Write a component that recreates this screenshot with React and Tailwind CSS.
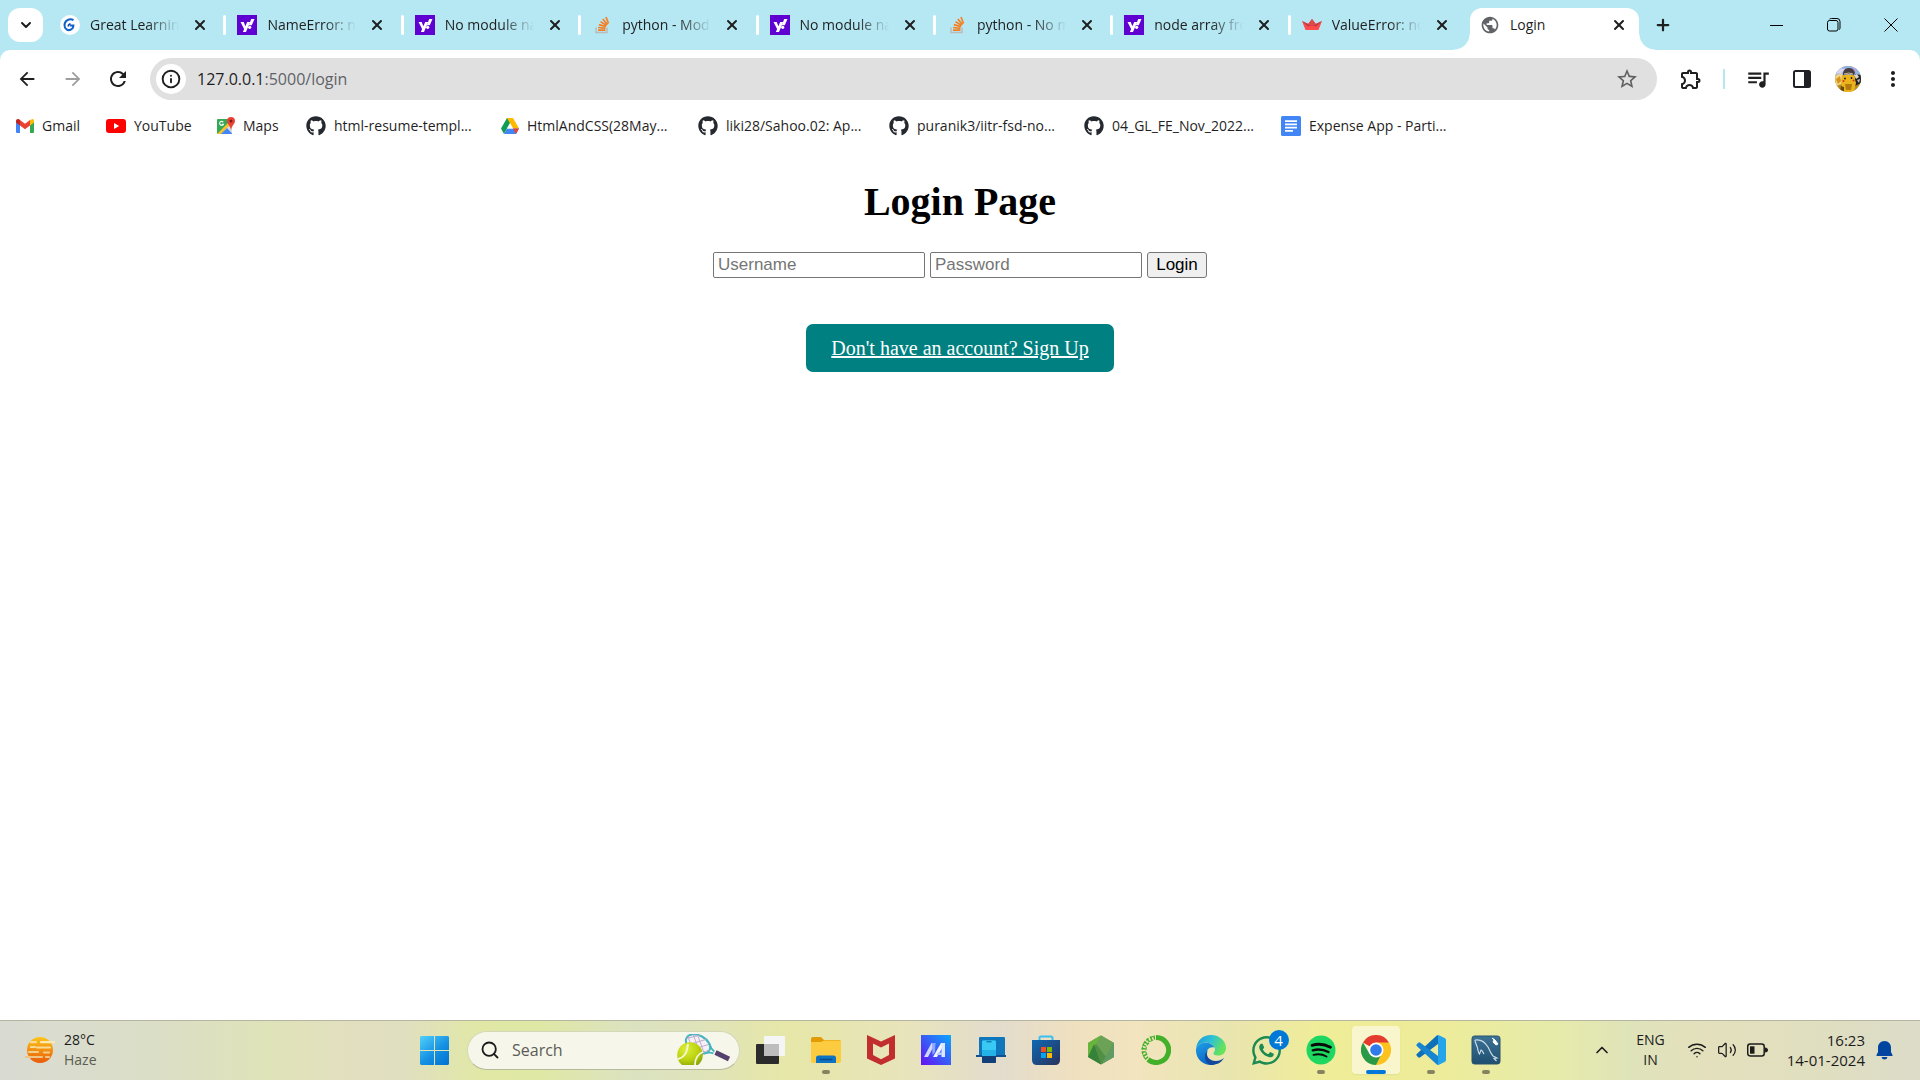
import { ChevronDown, ChevronUp, X, Plus, Info, Search, Wifi, Volume2 } from 'lucide-react';
import { FaGithub, FaWhatsapp } from 'react-icons/fa';
import {
  MdArrowBack,
  MdArrowForward,
  MdRefresh,
  MdStarBorder,
  MdOutlineExtension,
  MdQueueMusic,
  MdMoreVert,
  MdPublic,
} from 'react-icons/md';

/* ---------- favicons ---------- */

function GreatLearningIcon() {
  return (
    <svg viewBox="0 0 20 20" className="size-5">
      <circle cx="10" cy="10" r="10" fill="#fff" />
      <path d="M13.500 5.200C9.500 3 4.500 5.500 4.500 10.200c0 4 3.500 5.600 6 4.600 2-.8 2.800-2.600 2.900-4.300H9.800" fill="none" stroke="#0f62c9" strokeWidth="2" />
      <path d="M10.500 8.800c-1.500.4-2.300 1.400-2.300 2.600" fill="none" stroke="#1a3fa8" strokeWidth="1.500" />
    </svg>
  );
}

function YahooIcon() {
  return (
    <svg viewBox="0 0 20 20" className="size-5">
      <rect width="20" height="20" fill="#5f01d1" />
      <path d="M3.500 7h3.200l1.700 4.200L10.200 7h3L9 17H5.900l1.200-2.900z" fill="#fff" />
      <path d="M14.200 4h3.300l-2.700 6.300h-3z" fill="#fff" />
      <circle cx="12.700" cy="12.300" r="1.600" fill="#fff" />
    </svg>
  );
}

function StackIcon() {
  return (
    <svg viewBox="0 0 20 20" className="size-5">
      <path d="M4 12.500v5h11v-5" fill="none" stroke="#bcbbbb" strokeWidth="1.500" />
      <g stroke="#f48024" strokeWidth="1.700">
        <path d="M6 15.200h7.400M6.100 12.500l7.300.9M6.900 9.600l7 2M8.500 6.600l6.200 3.900M10.800 4l4.700 5.600M14 2l2.500 6.500" />
      </g>
    </svg>
  );
}

function CrownIcon() {
  return (
    <svg viewBox="0 0 20 20" className="size-5">
      <path d="M0 6l6 3.200L10 4l4 5.200L20 6l-3.500 9h-13z" fill="#ff4b4b" />
      <path d="M0 6l10 4.500L20 6l-5.500 5.500L10 10.500l-4.500 1z" fill="#bd4043" />
      <path d="M6 9.200L10 4l4 5.200-4 2z" fill="#e0474a" />
    </svg>
  );
}

function GmailIcon() {
  return (
    <svg viewBox="0 0 18 14" className="h-[14px] w-[18px]">
      <path d="M0 2v11a1 1 0 001 1h3V6z" fill="#4285f4" />
      <path d="M18 2v11a1 1 0 01-1 1h-3V6z" fill="#34a853" />
      <path d="M14 1l2-.8C17.200-.3 18 .8 18 2v1.500L14 6.500z" fill="#fbbc04" />
      <path d="M4 1l5 3.800L14 1v5.500l-5 3.800-5-3.800z" fill="#ea4335" />
      <path d="M0 2C0 .5 1.500-.5 3 .3l1 .7v5.500l-4-3z" fill="#c5221f" />
    </svg>
  );
}

function YouTubeIcon() {
  return (
    <svg viewBox="0 0 20 14" className="h-[14px] w-5">
      <rect width="20" height="14" rx="3" fill="#f00" />
      <path d="M8 4v6l5.200-3z" fill="#fff" />
    </svg>
  );
}

function MapsIcon() {
  return (
    <svg viewBox="0 0 18 18" className="size-[18px]">
      <rect x="0" y="2" width="15" height="15" rx="1" fill="#34a853" />
      <path d="M4 17L15 5v11a1 1 0 01-1 1z" fill="#d8dde3" />
      <path d="M4 17l6-6 5 5.500v.5z" fill="#4285f4" />
      <path d="M0 17L12 5l3 1L3.500 17z" fill="#fbc02d" />
      <path d="M6.300 5.200a2 2 0 10.200 2H4.800" fill="none" stroke="#fff" strokeWidth="1.100" />
      <path d="M14 0a4 4 0 014 4c0 3-3 4-4 9-1-5-4-6-4-9a4 4 0 014-4z" fill="#ea4335" />
      <circle cx="14" cy="4" r="1.500" fill="#7b1f16" />
    </svg>
  );
}

function DriveIcon() {
  return (
    <svg viewBox="0 0 18 16" className="h-4 w-[18px]">
      <path d="M6 0h6L6 10.600 3 16 0 10.600z" fill="#0f9d58" />
      <path d="M6 0h6l6 10.600h-6z" fill="#ffba00" />
      <path d="M6 10.600h12L15 16H3z" fill="#4285f4" />
      <path d="M12 10.600h6L15 16z" fill="#ea4335" />
      <path d="M9 5.300l3 5.300H6z" fill="#fff" />
    </svg>
  );
}

function DocsIcon() {
  return (
    <svg viewBox="0 0 20 20" className="size-5">
      <rect width="20" height="20" rx="1.500" fill="#4285f4" />
      <path d="M4 5.200h12M4 8.400h12M4 11.600h12M4 14.800h8" stroke="#fff" strokeWidth="1.800" />
    </svg>
  );
}

function GithubMark() {
  return <FaGithub className="size-5 text-[#24292f]" />;
}

/* ---------- browser window ---------- */

const tabs = [
  { title: 'Great Learning', Icon: GreatLearningIcon },
  { title: 'NameError: na', Icon: YahooIcon },
  { title: 'No module na', Icon: YahooIcon },
  { title: 'python - Mod', Icon: StackIcon },
  { title: 'No module na', Icon: YahooIcon },
  { title: 'python - No m', Icon: StackIcon },
  { title: 'node array fro', Icon: YahooIcon },
  { title: 'ValueError: no', Icon: CrownIcon },
];

const bookmarks = [
  { label: 'Gmail', Icon: GmailIcon, width: 'w-[90px]' },
  { label: 'YouTube', Icon: YouTubeIcon, width: 'w-[111px]' },
  { label: 'Maps', Icon: MapsIcon, width: 'w-[89px]' },
  { label: 'html-resume-templ...', Icon: GithubMark, width: 'w-[195px]' },
  { label: 'HtmlAndCSS(28May...', Icon: DriveIcon, width: 'w-[197px]' },
  { label: 'liki28/Sahoo.02: Ap...', Icon: GithubMark, width: 'w-[191px]' },
  { label: 'puranik3/iitr-fsd-no...', Icon: GithubMark, width: 'w-[195px]' },
  { label: '04_GL_FE_Nov_2022...', Icon: GithubMark, width: 'w-[197px]' },
  { label: 'Expense App - Parti...', Icon: DocsIcon, width: 'w-[180px]' },
];

function TabStrip() {
  return (
    <header className="flex h-[50px] items-center bg-[#b5e8f3] pl-2">
      <button aria-label="Search tabs" className="flex h-[34px] w-[35px] shrink-0 items-center justify-center rounded-xl bg-white">
        <ChevronDown className="size-4" strokeWidth={3} />
      </button>
      <nav className="ml-1.5 flex w-[1419px] items-center">
        {tabs.map(({ title, Icon }, i) => (
          <div key={i} className="flex h-5 min-w-0 flex-1 items-center pl-[11px]">
            <span className="shrink-0"><Icon /></span>
            <span className="ml-2.5 w-[92px] overflow-hidden whitespace-nowrap text-[14px] leading-5 [mask-image:linear-gradient(to_right,black_62%,transparent_97%)]">
              {title}
            </span>
            <button aria-label="Close tab" className="ml-2.5">
              <X className="size-4" strokeWidth={3} />
            </button>
            {i < tabs.length - 1 && <span className="ml-auto h-5 w-[3px] shrink-0 rounded-sm bg-white" />}
          </div>
        ))}
      </nav>
      <div className="relative ml-0.5 flex h-[42px] w-[169px] shrink-0 items-center self-end rounded-t-xl bg-white pb-2 pl-2.5">
        <span className="absolute bottom-0 -left-4 size-4 bg-[radial-gradient(circle_at_0_0,transparent_15px,white_16px)]" />
        <span className="absolute -right-4 bottom-0 size-4 bg-[radial-gradient(circle_at_100%_0,transparent_15px,white_16px)]" />
        <MdPublic className="size-5 text-[#5f6368]" />
        <span className="ml-2.5 text-[14px] leading-5">Login</span>
        <button aria-label="Close tab" className="mr-3 ml-auto">
          <X className="size-4" strokeWidth={3} />
        </button>
      </div>
      <button aria-label="New tab" className="ml-[15px]">
        <Plus className="size-[18px]" strokeWidth={3} />
      </button>
      <div className="mr-[22px] ml-auto flex shrink-0 items-center gap-[43px]">
        <button aria-label="Minimize">
          <svg viewBox="0 0 14 14" className="size-3.5"><path d="M0 7.500h13" stroke="#000" /></svg>
        </button>
        <button aria-label="Restore">
          <svg viewBox="0 0 14 14" className="size-3.5" fill="none" stroke="#000">
            <rect x=".5" y="2.500" width="10.500" height="10.500" rx="2" />
            <path d="M2.500 1.200Q3 .5 4.500.5H10Q13 .5 13 3.500V10q0 1-.8 1.700" />
          </svg>
        </button>
        <button aria-label="Close window">
          <svg viewBox="0 0 14 14" className="size-3.5"><path d="M.5.500l13 13M13.500.5l-13 13" stroke="#000" /></svg>
        </button>
      </div>
    </header>
  );
}

function Avatar() {
  return (
    <svg viewBox="0 0 26 26" className="size-[26px]">
      <defs>
        <clipPath id="avatarClip"><circle cx="13" cy="13" r="13" /></clipPath>
      </defs>
      <g clipPath="url(#avatarClip)">
        <rect width="26" height="26" fill="#b98a1c" />
        <path d="M0 0h26v9H0z" fill="#8fb4e6" />
        <path d="M4 2l6 1-3 4-6 1z" fill="#d9d3f2" />
        <path d="M16 0l6 3-2 3z" fill="#b7a4de" />
        <path d="M0 10l6-3 2 3-1 8-6 2z" fill="#f1d48a" />
        <path d="M1 13l4-3 1 5-3 3z" fill="#d2951a" />
        <path d="M20 8l6 1v8l-6 3z" fill="#20212a" />
        <path d="M19 9l3-1 2 3-3 2z" fill="#ddd6c4" />
        <path d="M22 14l3-1-1 4z" fill="#c9c2b4" />
        <path d="M7 10q6-3 12 0l2 7-2 9H8l-2-9z" fill="#e9b51a" />
        <path d="M8 7q1-5 6-5 5 0 6 5l-1 2q-5-2-11 0z" fill="#4a3d40" />
        <path d="M9 8q5-2 9 0" fill="none" stroke="#cbb89c" />
        <path d="M10 18h7l-1 6h-5z" fill="#b67a0c" />
        <path d="M6 20l3 1v5H5z" fill="#6b4a0c" />
        <circle cx="10" cy="12.500" r=".9" fill="#241607" />
        <circle cx="16.500" cy="12" r=".9" fill="#241607" />
        <circle cx="8.500" cy="15" r="1.100" fill="#d93a1d" />
        <circle cx="18.500" cy="14.500" r="1.100" fill="#d93a1d" />
      </g>
    </svg>
  );
}

function Toolbar() {
  return (
    <div className="bg-[#b5e8f3]">
      <div className="flex h-[58px] items-center rounded-t-[10px] bg-white pl-4 text-[#1f1f1f]">
        <button aria-label="Back"><MdArrowBack className="size-[22px]" /></button>
        <button aria-label="Forward" className="ml-6 text-[#9e9e9e]"><MdArrowForward className="size-[22px]" /></button>
        <button aria-label="Reload" className="ml-[22px]"><MdRefresh className="size-6" /></button>
        <div className="ml-5 flex h-[42px] min-w-0 flex-1 items-center rounded-full bg-[#e0e0e0] pr-[18px] pl-1.5">
          <button aria-label="View site information" className="flex size-[30px] shrink-0 items-center justify-center rounded-full bg-white">
            <Info className="size-5" strokeWidth={2.300} />
          </button>
          <p className="ml-[11px] flex-1 text-[16px] leading-6">
            127.0.0.1<span className="text-[#5f6368]">:5000/login</span>
          </p>
          <button aria-label="Bookmark this tab" className="text-[#5f5f5f]"><MdStarBorder className="size-6" /></button>
        </div>
        <button aria-label="Extensions" className="ml-[22px]"><MdOutlineExtension className="size-6" /></button>
        <span className="ml-5 h-5 w-0.5 bg-[#b5e8f3]" />
        <button aria-label="Media controls" className="ml-5"><MdQueueMusic className="size-[26px]" /></button>
        <button aria-label="Side panel" className="ml-[22px]">
          <svg viewBox="0 0 18 18" className="size-[18px]">
            <rect x="1" y="1" width="16" height="16" rx="1.500" fill="none" stroke="#202124" strokeWidth="2" />
            <path d="M11 1h6v16h-6z" fill="#202124" />
          </svg>
        </button>
        <button aria-label="Profile" className="ml-6"><Avatar /></button>
        <button aria-label="Menu" className="mr-[15px] ml-5"><MdMoreVert className="size-6" /></button>
      </div>
      <nav className="flex h-9 items-center overflow-hidden bg-white pl-4">
        {bookmarks.map(({ label, Icon, width }) => (
          <a key={label} href="#" className={`flex shrink-0 items-center gap-2 ${width}`}>
            <Icon />
            <span className="whitespace-nowrap text-[14px] leading-5">{label}</span>
          </a>
        ))}
      </nav>
    </div>
  );
}

function LoginPage() {
  const field =
    'h-[26px] w-[212px] rounded-[2px] border border-[#767676] bg-white px-1 font-["Liberation_Sans",Arial,sans-serif] text-[17px] leading-5 placeholder:text-[#757575]';
  return (
    <main className='flex flex-1 flex-col items-center bg-white font-["Liberation_Serif","Times_New_Roman",serif] text-black'>
      <h1 className="mt-9 text-[40px] leading-[44px] font-bold">Login Page</h1>
      <form className="mt-7 flex gap-[5px]" onSubmit={(e) => e.preventDefault()}>
        <input type="text" aria-label="Username" placeholder="Username" className={field} />
        <input type="password" aria-label="Password" placeholder="Password" className={field} />
        <button
          type="submit"
          className='h-[26px] w-[60px] rounded-[3px] border border-[#767676] bg-[#efefef] font-["Liberation_Sans",Arial,sans-serif] text-[17px] leading-5'
        >
          Login
        </button>
      </form>
      <a href="#" className="mt-[46px] rounded-[7px] bg-[#008080] px-[25px] py-3 text-[20px] leading-6 text-white underline">
        Don&apos;t have an account? Sign Up
      </a>
    </main>
  );
}

/* ---------- taskbar icons ---------- */

function HazeIcon() {
  return (
    <svg viewBox="0 0 30 30" className="size-[30px]">
      <defs>
        <linearGradient id="sun" x1="0" y1="0" x2="0" y2="1">
          <stop offset="0" stopColor="#fbc51b" />
          <stop offset="1" stopColor="#ea5a08" />
        </linearGradient>
      </defs>
      <circle cx="15" cy="15" r="13" fill="url(#sun)" />
      <g strokeWidth="2.200" strokeLinecap="round">
        <path d="M16 7.200h13" stroke="#fbe9b0" />
        <path d="M6 7.200h5M12 12.500h13M6 12h4" stroke="#f8dc92" />
        <path d="M4 17h9M19 17.500h5" stroke="#f2cf8c" />
        <path d="M1 22h16M21 22h3" stroke="#efc584" />
      </g>
    </svg>
  );
}

function WindowsIcon() {
  return (
    <svg viewBox="0 0 29 29" className="size-[29px]">
      <defs>
        <linearGradient id="win" gradientUnits="userSpaceOnUse" x1="0" y1="0" x2="24" y2="29">
          <stop offset="0" stopColor="#50d0fc" />
          <stop offset=".6" stopColor="#1590e2" />
          <stop offset="1" stopColor="#0476d4" />
        </linearGradient>
      </defs>
      <path d="M1 0h13v14H0V1zM15 0h13l1 1v13H15zM0 15h14v14H1l-1-1zM15 15h14v13l-1 1H15z" fill="url(#win)" />
    </svg>
  );
}

function TennisIcon() {
  return (
    <svg viewBox="0 0 54 32" className="h-8 w-[54px] shrink-0">
      <defs>
        <radialGradient id="ball" cx=".35" cy=".3" r=".8">
          <stop offset="0" stopColor="#dcee3a" />
          <stop offset=".6" stopColor="#bcd20e" />
          <stop offset="1" stopColor="#8aa60c" />
        </radialGradient>
        <clipPath id="racketHead"><ellipse cx="21" cy="10" rx="13" ry="8.500" /></clipPath>
      </defs>
      <g transform="rotate(28 21 10)">
        <ellipse cx="21" cy="10" rx="13" ry="8.500" fill="#f6f0f6" stroke="#42b6be" strokeWidth="2" />
        <g clipPath="url(#racketHead)" stroke="#bfa9cc" strokeWidth=".9">
          <path d="M4 4l20 18M8 0l22 20M14 0l22 20M0 8l16 14M8 20L28 0M14 22L34 2M20 24L40 4M2 16L20 0" />
        </g>
        <path d="M31 4.500q4 4 8 4.500M31 15.500q4-4 8-4.500" fill="none" stroke="#42b6be" strokeWidth="1.800" />
      </g>
      <path d="M38.500 18.500L52 25" stroke="#55406e" strokeWidth="5" strokeLinejoin="round" />
      <path d="M5 31a12.800 12.800 0 1116 0z" fill="url(#ball)" />
      <path d="M1 25q9-2 10-15M18 31q0-10 8-13" fill="none" stroke="#f4f8dc" strokeWidth="1.800" />
    </svg>
  );
}

function TaskViewIcon() {
  return (
    <svg viewBox="0 0 30 30" className="size-[30px]">
      <rect x="0" y="9" width="23" height="20" rx="1" fill="#2b2b2b" />
      <rect x="8" y="1" width="21" height="20" rx="1" fill="#f5f5f5" />
      <path d="M8 9h15v12H8z" fill="#bdbdbd" />
    </svg>
  );
}

function FolderIcon() {
  return (
    <svg viewBox="0 0 30 30" className="size-[30px]">
      <path d="M0 4q0-2 2-2h8l3 3h15q2 0 2 2v5H0z" fill="#e09b05" />
      <path d="M0 7h10l3-1.500h16l1 1V26q0 2-2 2H2q-2 0-2-2z" fill="#fdcb3f" />
      <path d="M5 28v-5q0-2.500 2.500-2.500h15q2.500 0 2.500 2.500v5z" fill="#0f73c4" />
      <path d="M8.500 24.500h13" stroke="#0a4c8c" strokeWidth="1.500" />
    </svg>
  );
}

function McAfeeIcon() {
  return (
    <svg viewBox="0 0 28 30" className="h-[30px] w-7">
      <path d="M0 0l14 6.500L28 0v23.500L14 30 0 23.500zM6 8.500V20l8 4.200L22 20V8.500l-8 4z" fill="#c22d2d" fillRule="evenodd" />
    </svg>
  );
}

function MyAsusIcon() {
  return (
    <svg viewBox="0 0 30 30" className="size-[30px]">
      <defs>
        <linearGradient id="asus" x1="0" y1="1" x2="1" y2="0">
          <stop offset="0" stopColor="#6610f0" />
          <stop offset="1" stopColor="#0aa8ff" />
        </linearGradient>
      </defs>
      <rect width="30" height="30" fill="url(#asus)" />
      <path d="M3 22L10.500 8h4L7 22z" fill="#cfd6ff" />
      <path d="M12 22l8-14h4l-8 14z" fill="#f2f5ff" />
      <path d="M11 8h3.500l-.5 9-2.500 3z" fill="#8ea6ff" />
      <path d="M20.500 8H24v14h-3.500z" fill="#dde6ff" />
      <path d="M17 17.500h4V20h-5.500z" fill="#b6c9ff" />
    </svg>
  );
}

function PhoneLinkIcon() {
  return (
    <svg viewBox="0 0 30 30" className="size-[30px]">
      <rect x="3" y="2" width="26" height="20" rx="1" fill="#0f76bb" />
      <path d="M0 20h30v2H0z" fill="#11528e" />
      <rect x="6" y="5" width="14" height="23" rx="1.500" fill="#23b1e8" />
      <path d="M6 6h14v9H6z" fill="#38c9f4" />
      <path d="M6 21h14v6q0 1-1 1H7q-1 0-1-1z" fill="#123f78" />
      <path d="M10.500 6.800h5" stroke="#0c5c92" />
    </svg>
  );
}

function StoreIcon() {
  return (
    <svg viewBox="0 0 30 30" className="size-[30px]">
      <defs>
        <linearGradient id="store" x1="0" y1="0" x2="1" y2="1">
          <stop offset="0" stopColor="#0d69b4" />
          <stop offset="1" stopColor="#2a315c" />
        </linearGradient>
      </defs>
      <path d="M8.500 7V3q0-1.500 1.500-1.500h10q1.500 0 1.500 1.500v4" fill="none" stroke="#38c1f0" strokeWidth="2" />
      <path d="M1 5h28v20q0 5-5 5H6q-5 0-5-5z" fill="url(#store)" />
      <path d="M10 12h5v5h-5z" fill="#f25022" />
      <path d="M16 12h5v5h-5z" fill="#7fba00" />
      <path d="M10 18h5v5h-5z" fill="#00a4ef" />
      <path d="M16 18h5v5h-5z" fill="#ffb900" />
    </svg>
  );
}

function NodeIcon() {
  return (
    <svg viewBox="0 0 26 30" className="h-[30px] w-[26px]">
      <path d="M13 .5L26 8v14l-13 7.500L0 22V8z" fill="#519044" />
      <path d="M13 .5L26 8l-8 14-13-17z" fill="#6ba255" />
      <path d="M13 .5L0 8v14L13 .5z" fill="#69b53c" />
      <path d="M0 22L6 9l7 20.500z" fill="#37823a" />
      <path d="M26 8v14l-13 7.500z" fill="#5f9b62" />
    </svg>
  );
}

function AnacondaIcon() {
  return (
    <svg viewBox="0 0 30 30" className="size-[30px]" fill="none" stroke="#43b02a">
      <path d="M15 2.500a12.500 12.500 0 11-8 22" strokeWidth="5" />
      <path d="M14 2.500a12.500 12.500 0 00-7 22" strokeWidth="4" strokeDasharray="1.500 1.800" />
      <path d="M12 1.500a14 14 0 00-8 22M12 5a11 11 0 00-5.500 16" strokeWidth="1.200" strokeDasharray="3 2" />
    </svg>
  );
}

function EdgeIcon() {
  return (
    <svg viewBox="0 0 30 30" className="size-[30px]">
      <defs>
        <linearGradient id="edgeTop" x1="0" y1="0" x2="1" y2=".4">
          <stop offset="0" stopColor="#1b91d8" />
          <stop offset=".5" stopColor="#2cc0d8" />
          <stop offset="1" stopColor="#66e35a" />
        </linearGradient>
        <linearGradient id="edgeLeft" x1="0" y1="0" x2=".5" y2="1">
          <stop offset="0" stopColor="#1ea1e6" />
          <stop offset="1" stopColor="#0c63c4" />
        </linearGradient>
      </defs>
      <path d="M0 14C1 5 7 0 15 0c9 0 15 6.500 15 13 0 5-4 7.500-7.500 7.500-4 0-5.500-1.500-5-2.500 1-1.500 1.500-2.500 1.500-4C18 10 14 7.500 9.500 7.500 5 7.500 1.500 10 0 14z" fill="url(#edgeTop)" />
      <path d="M0 14c1.500-4 5-6.500 9.500-6.500 4 0 7.500 2 9 5-5-1.500-8 2-8 6 0 5 4 9.500 10 9.300C18.500 29.300 17 30 15 30 6.500 30-.7 23 0 14z" fill="url(#edgeLeft)" />
      <path d="M12 15c-3 5 .5 11 8 11 3 0 5.500-1 8-3-3 5-7.500 7-13 7-6-1.500-8.500-10-3-15z" fill="#114a9c" />
    </svg>
  );
}

function WhatsAppIcon() {
  return (
    <span className="relative">
      <FaWhatsapp className="size-[33px] text-[#1c8a52]" />
      <span className="absolute -top-1 -right-1.5 flex size-5 items-center justify-center rounded-full bg-[#0078d7] text-[15px] leading-5 text-white">4</span>
    </span>
  );
}

function SpotifyIcon() {
  return (
    <svg viewBox="0 0 30 30" className="size-[30px]">
      <circle cx="15" cy="15" r="14.500" fill="#1ed760" />
      <g fill="none" stroke="#0a0a0a" strokeLinecap="round">
        <path d="M6 10.300c6-1.800 13-1 18.500 1.900" strokeWidth="2.800" />
        <path d="M6.700 15.300c5.500-1.500 11-.8 15.800 1.800" strokeWidth="2.300" />
        <path d="M7.500 19.900c4.500-1.200 9-.7 13 1.600" strokeWidth="1.900" />
      </g>
    </svg>
  );
}

function ChromeIcon() {
  return (
    <svg viewBox="0 0 30 30" className="size-[30px]">
      <path d="M15 15L2 7.500A15 15 0 0128 7.500z" fill="#e33b2e" />
      <path d="M15 7.500h13A15 15 0 0115 30l6.500-11.500z" fill="#fcc31e" />
      <path d="M11.500 29.600L15 30l6.500-11.200L15 21z" fill="#fcc31e" />
      <path d="M2 7.500l6.500 11.300 6.500 3 4.500-.9L15 30A15 15 0 012 7.500z" fill="#2a9a48" />
      <circle cx="15" cy="15" r="7.500" fill="#fff" />
      <circle cx="15" cy="15" r="5.800" fill="#2f7bea" />
    </svg>
  );
}

function VsCodeIcon() {
  return (
    <svg viewBox="0 0 30 30" className="size-[30px]">
      <path d="M22 0v9L4 22.500Q3 23 2 22l-1.500-1.500Q0 19.500 1 18.800L20.500.8z" fill="#0d70b8" />
      <path d="M22 30v-9L4 7.500Q3 7 2 8L.5 9.500Q0 10.500 1 11.200l19.500 18z" fill="#1785cf" />
      <path d="M20.500.8Q21.500-.3 23 .2l6 3Q30 3.700 30 5v20q0 1.300-1 1.800l-6 3q-1.500.5-2.500-.6 1.500.5 1.500-1.200V2q0-1.700-1.500-1.200z" fill="#25a4ec" />
    </svg>
  );
}

function MySqlIcon() {
  return (
    <svg viewBox="0 0 30 30" className="size-[30px]">
      <defs>
        <linearGradient id="mysql" x1="0" y1="0" x2="0" y2="1">
          <stop offset="0" stopColor="#3d7396" />
          <stop offset="1" stopColor="#1f4f70" />
        </linearGradient>
      </defs>
      <rect x="1" y="1" width="28" height="28" rx="2.500" fill="url(#mysql)" stroke="#28536e" />
      <path d="M4 5c6-1 10 2 13 7 2 4 3 7 5 9l4 2-3 .5 2.500 2.500M4 5c0 3 2 5 2.500 8 .5 3 1 5 2 6l1.500-4c2 1 2 3 3 4" fill="none" stroke="#c9dbe6" strokeWidth="1.200" />
      <path d="M21 3l2 2-1 2 3 3 2-1-3-4z" fill="#fff" stroke="#fff" />
    </svg>
  );
}

const apps = [
  { name: 'Task view', Icon: TaskViewIcon },
  { name: 'File Explorer', Icon: FolderIcon, running: true },
  { name: 'McAfee', Icon: McAfeeIcon },
  { name: 'MyASUS', Icon: MyAsusIcon },
  { name: 'Phone Link', Icon: PhoneLinkIcon },
  { name: 'Microsoft Store', Icon: StoreIcon },
  { name: 'Node.js', Icon: NodeIcon },
  { name: 'Anaconda', Icon: AnacondaIcon },
  { name: 'Edge', Icon: EdgeIcon },
  { name: 'WhatsApp', Icon: WhatsAppIcon },
  { name: 'Spotify', Icon: SpotifyIcon, running: true },
  { name: 'Chrome', Icon: ChromeIcon, active: true },
  { name: 'VS Code', Icon: VsCodeIcon, running: true },
  { name: 'MySQL Workbench', Icon: MySqlIcon, running: true },
];

function AppButton({ name, Icon, running, active }) {
  return (
    <button
      aria-label={name}
      className={`relative flex h-12 w-12 shrink-0 items-center justify-center rounded ${active ? 'bg-[#f9f6cd] shadow-xs' : ''}`}
    >
      <Icon />
      {running && <span className="absolute bottom-0 h-1 w-2 rounded-full bg-[#868460]" />}
      {active && <span className="absolute bottom-0 h-1 w-5 rounded-full bg-[#0078d7]" />}
    </button>
  );
}

function Taskbar() {
  return (
    <footer className="flex h-[60px] shrink-0 items-center justify-between border-t border-[#b5b5a0] bg-[linear-gradient(to_right,#d9dbd3_0%,#dbdec6_8%,#dfe3b8_14%,#e2dfbf_18%,#e0dfc0_21%,#e1e8a6_25%,#e0e8a5_28%,#dbe2c0_33%,#dfe3bb_36%,#e6e7a8_41%,#e8e4bb_47%,#e3dccd_52%,#efe0bf_56%,#f2e4bf_59%,#e9e5af_64%,#f0ed98_69%,#eeec98_74%,#e6ebaa_81%,#dfe3ba_85%,#e4e0bd_89%,#e0dfbf_94%,#dcdcc9_100%)] pb-px text-[#1c1c1c]">
      <button aria-label="Weather" className="flex w-[380px] items-center gap-[9px] pl-[25px] text-left text-[14px] leading-5">
        <HazeIcon />
        <span>
          28°C
          <br />
          <span className="text-[#5b5c52]">Haze</span>
        </span>
      </button>
      <div className="flex shrink-0 items-center">
        <button aria-label="Start" className="flex size-12 items-center justify-center"><WindowsIcon /></button>
        <label className="ml-[9px] flex h-[39px] w-[273px] items-center rounded-full border border-[#d5d8b8] border-b-[#b7b99b] bg-[#f6f7ea] pr-2 pl-3">
          <Search className="size-5 shrink-0" strokeWidth={2.200} />
          <input type="text" aria-label="Search" placeholder="Search" className="ml-3 w-full min-w-0 bg-transparent text-[16px] leading-6 outline-none placeholder:text-[#5c5c58]" />
          <TennisIcon />
        </label>
        <div className="ml-[7px] flex gap-[7px]">
          {apps.map((app) => (
            <AppButton key={app.name} {...app} />
          ))}
        </div>
      </div>
      <div className="flex w-[380px] items-center justify-end pr-[27px] text-[14px] leading-5">
        <button aria-label="Show hidden icons"><ChevronUp className="size-5" /></button>
        <button className="ml-6 text-center">ENG<br />IN</button>
        <button aria-label="Network, volume and battery" className="ml-[22px] flex items-center gap-2.5">
          <Wifi className="size-5" strokeWidth={1.700} />
          <Volume2 className="size-5" strokeWidth={1.500} />
          <svg viewBox="0 0 21 14" className="h-[14px] w-[21px]">
            <rect x=".7" y="1" width="16.500" height="12" rx="2.500" fill="none" stroke="#1c1c1c" strokeWidth="1.500" />
            <rect x="3" y="3.300" width="4.500" height="7.400" fill="#1c1c1c" />
            <path d="M18 4.500q3 .5 3 2.500t-3 2.500z" fill="#1c1c1c" />
          </svg>
        </button>
        <time className="ml-[19px] text-right text-[15px]">16:23<br />14-01-2024</time>
        <svg viewBox="0 0 17 20" className="ml-[11px] h-5 w-[17px] shrink-0">
          <path d="M8.500 1C4.500 1 2 4 2 7.500V12L.5 15v1h16v-1L15 12V7.500C15 4 12.500 1 8.500 1zM5.500 17h6q-.5 2.500-3 2.500t-3-2.500z" fill="#0046a0" />
        </svg>
      </div>
    </footer>
  );
}

export default function App() {
  return (
    <div className='flex min-h-screen flex-col overflow-hidden bg-white font-["Open_Sans","Noto_Sans",sans-serif] text-[#1f1f1f]'>
      <TabStrip />
      <Toolbar />
      <LoginPage />
      <Taskbar />
    </div>
  );
}
